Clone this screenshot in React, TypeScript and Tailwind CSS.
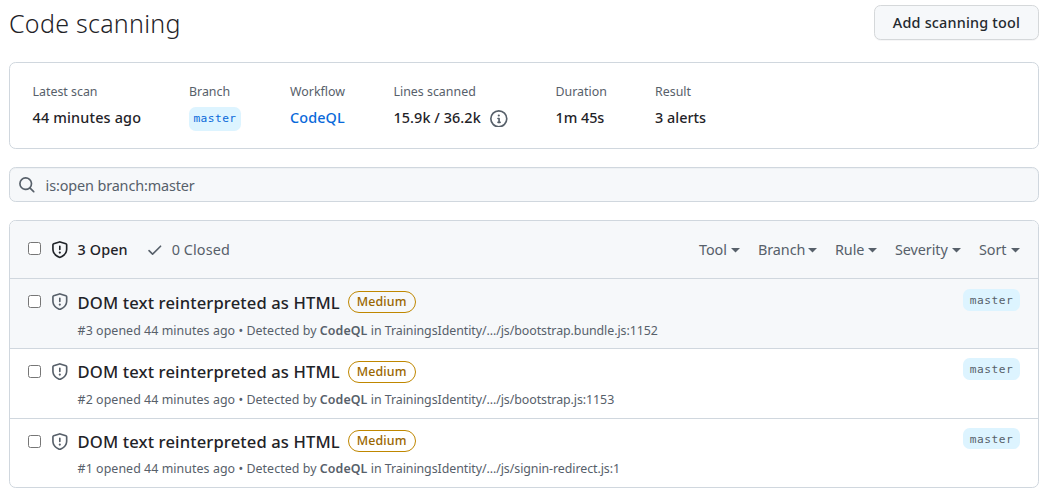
import type { ReactNode } from "react";

const SHIELD =
  "M7.467.133a1.748 1.748 0 0 1 1.066 0l5.25 1.68A1.75 1.75 0 0 1 15 3.48V7c0 1.566-.32 3.182-1.303 4.682-.983 1.498-2.585 2.813-5.032 3.855a1.697 1.697 0 0 1-1.33 0c-2.447-1.042-4.049-2.357-5.032-3.855C1.32 10.182 1 8.566 1 7V3.48a1.755 1.755 0 0 1 1.217-1.667Zm.61 1.429a.25.25 0 0 0-.153 0l-5.25 1.68a.25.25 0 0 0-.174.238V7c0 1.358.275 2.666 1.057 3.86.784 1.194 2.121 2.34 4.366 3.297a.196.196 0 0 0 .154 0c2.245-.956 3.582-2.104 4.366-3.298C13.225 9.666 13.5 8.36 13.5 7V3.48a.251.251 0 0 0-.174-.237l-5.25-1.68ZM8.75 4.75v3a.75.75 0 0 1-1.5 0v-3a.75.75 0 0 1 1.5 0ZM9 10.5a1 1 0 1 1-2 0 1 1 0 0 1 2 0Z";
const CHECK =
  "M13.78 4.22a.75.75 0 0 1 0 1.06l-7.25 7.25a.75.75 0 0 1-1.06 0L2.22 9.28a.751.751 0 0 1 .018-1.042.751.751 0 0 1 1.042-.018L6 10.94l6.72-6.72a.75.75 0 0 1 1.06 0Z";
const SEARCH =
  "M10.68 11.74a6 6 0 0 1-7.922-8.982 6 6 0 0 1 8.982 7.922l3.04 3.04a.749.749 0 0 1-.326 1.275.749.749 0 0 1-.734-.215ZM11.5 7a4.499 4.499 0 1 0-8.997 0A4.499 4.499 0 0 0 11.5 7Z";
const INFO =
  "M0 8a8 8 0 1 1 16 0A8 8 0 0 1 0 8Zm8-6.5a6.5 6.5 0 1 0 0 13 6.5 6.5 0 0 0 0-13ZM6.5 7.75A.75.75 0 0 1 7.25 7h1a.75.75 0 0 1 .75.75v2.75h.25a.75.75 0 0 1 0 1.5h-2a.75.75 0 0 1 0-1.5h.25v-2h-.25a.75.75 0 0 1-.75-.75ZM8 6a1 1 0 1 1 0-2 1 1 0 0 1 0 2Z";

function Icon({ d, className = "" }: { d: string; className?: string }) {
  return (
    <svg viewBox="0 0 16 16" fill="currentColor" className={`size-[17.6px] shrink-0 ${className}`}>
      <path d={d} />
    </svg>
  );
}

function Checkbox() {
  return (
    <input
      type="checkbox"
      className="mb-[2px] mr-[0.5px] size-[13px] shrink-0 appearance-none rounded-[2.5px] border border-[#767676] bg-white"
    />
  );
}

function Stat({ label, width, children }: { label: string; width: string; children: ReactNode }) {
  return (
    <div className={`shrink-0 ${width}`}>
      <div className="h-[18px] text-[12.4px] leading-[18px] text-[#57606a]">{label}</div>
      <div className="mt-[5px] flex h-6 items-center text-[14.4px] font-medium tracking-[0.1px]">{children}</div>
    </div>
  );
}

function Filter({ label, width }: { label: string; width: string }) {
  return (
    <button className={`flex shrink-0 items-center justify-between tracking-[-0.08px] ${width}`}>
      {label}
      <svg viewBox="0 0 9 5" fill="currentColor" className="mt-[3px] h-[5px] w-[9px]">
        <path d="M0 0h9L4.5 4.5Z" />
      </svg>
    </button>
  );
}

const alerts = [
  { id: 3, file: "bootstrap.bundle.js:1152", row: "h-[69px] bg-[#f6f8fa]", body: "pt-[12px]", meta: "mt-[7px]", badge: "mb-[2px]", chip: "mt-[10px] h-[22px]" },
  { id: 2, file: "bootstrap.js:1153", row: "h-[69px]", body: "pt-[11px]", meta: "mt-[7px]", badge: "", chip: "mt-[9px] h-[22px]" },
  { id: 1, file: "signin-redirect.js:1", row: "h-[68px]", body: "pt-[11px]", meta: "mt-[6px]", badge: "mb-[2px]", chip: "mt-[9px] h-[21px]" },
];

export default function App() {
  return (
    <main className="h-[499px] overflow-hidden bg-white pl-[9px] pr-[18px] pt-[5px] font-['Noto_Sans',sans-serif] text-[#1f2328]">
      <header className="flex h-[57px] items-start justify-between">
        <h1 className="text-[25px] leading-[37px] font-[350] tracking-[0.28px]">Code scanning</h1>
        <button className="h-[35px] w-[165px] rounded-[6.6px] border border-[#d5d8da] bg-[#f6f8fa] pt-px text-[14.4px] font-medium tracking-[0.2px] text-[#24292f] shadow-[0_1px_0_rgba(31,35,40,0.04)]">
          Add scanning tool
        </button>
      </header>

      <section className="flex h-[87px] rounded-[6.6px] border border-[#d0d7de] pl-[22.5px] pt-[20px]">
        <Stat label="Latest scan" width="w-[156.5px]">
          <span className="tracking-[0.17px]">44 minutes ago</span>
        </Stat>
        <Stat label="Branch" width="w-[101px]">
          <span className="mt-[2px] flex h-6 w-[52px] shrink-0 items-center justify-center rounded-[6.6px] bg-[#ddf4ff] pt-px font-['DejaVu_Sans_Mono',monospace] text-[11.2px] font-normal tracking-[0.45px] text-[#0969da]">
            master
          </span>
        </Stat>
        <Stat label="Workflow" width="w-[103.5px]">
          <a className="text-[#0969da]">CodeQL</a>
        </Stat>
        <Stat label="Lines scanned" width="w-[162px]">
          <span className="w-[96.5px] tracking-[0.07px]">15.9k / 36.2k</span>
          <Icon d={INFO} className="mt-px text-[#57606a]" />
        </Stat>
        <Stat label="Duration" width="w-[99.5px]">
          <span className="tracking-[-0.05px]">1m 45s</span>
        </Stat>
        <Stat label="Result" width="w-[100px]">
          <span className="tracking-[0.02px]">3 alerts</span>
        </Stat>
      </section>

      <div className="mt-[18px] flex h-[35px] items-center rounded-[6.6px] border border-[#d0d7de] bg-[#f6f8fa] pl-[8px] text-[14.4px] text-[#57606a] shadow-[inset_0_1px_0_rgba(208,215,222,0.2)]">
        <Icon d={SEARCH} />
        <span className="ml-[10px] mt-[2px] tracking-[-0.12px]">is:open branch:master</span>
      </div>

      <section className="mt-[18px] h-[268px] overflow-hidden rounded-[6.6px] border border-[#d0d7de]">
        <div className="flex h-[57px] items-center bg-[#f6f8fa] pl-[18px] pr-[18px] text-[14.4px] text-[#57606a]">
          <Checkbox />
          <Icon d={SHIELD} className="ml-[9.5px] mt-px text-[#1f2328]" />
          <span className="ml-[9px] w-[68px] font-medium tracking-[0.1px] text-[#1f2328]">3 Open</span>
          <Icon d={CHECK} className="mt-px" />
          <span className="ml-[8.5px] tracking-[0.1px]">0 Closed</span>
          <div className="ml-auto flex gap-[18px]">
            <Filter label="Tool" width="w-[41px]" />
            <Filter label="Branch" width="w-[59px]" />
            <Filter label="Rule" width="w-[42px]" />
            <Filter label="Severity" width="w-[66px]" />
            <Filter label="Sort" width="w-[41px]" />
          </div>
        </div>
        {alerts.map((a) => (
          <div key={a.id} className={`box-content flex border-t border-[#d0d7de] px-[18px] ${a.row}`}>
            <div className="flex h-[46px] items-center">
              <Checkbox />
              <Icon d={SHIELD} className="mb-px ml-[9.5px] text-[#57606a]" />
            </div>
            <div className={`ml-[9px] grow ${a.body}`}>
              <div className="flex h-6 items-center">
                <h2 className="w-[270px] whitespace-nowrap text-[16.6px] font-medium tracking-[0.12px]">DOM text reinterpreted as HTML</h2>
                <span className={`flex h-[22px] w-[68px] items-center justify-center rounded-full border border-[#bf8700] text-[12.4px] font-medium tracking-[0.15px] text-[#9a6700] ${a.badge}`}>
                  Medium
                </span>
              </div>
              <p className={`whitespace-nowrap text-[12.4px] leading-[18px] text-[#57606a] ${a.meta}`}>
                <span className="tracking-[0.06px]">#{a.id} opened 44 minutes ago • Detected by </span>
                <span className="font-semibold tracking-[0.1px]">CodeQL</span> in{" "}
                <span className="tracking-[-0.07px]">TrainingsIdentity/.../js/{a.file}</span>
              </p>
            </div>
            <span className={`flex w-[57px] items-center justify-center rounded-[6.6px] bg-[#ddf4ff] pt-[3px] font-['DejaVu_Sans_Mono',monospace] text-[11.2px] tracking-[0.5px] text-[#57606a] ${a.chip}`}>
              master
            </span>
          </div>
        ))}
      </section>
    </main>
  );
}
